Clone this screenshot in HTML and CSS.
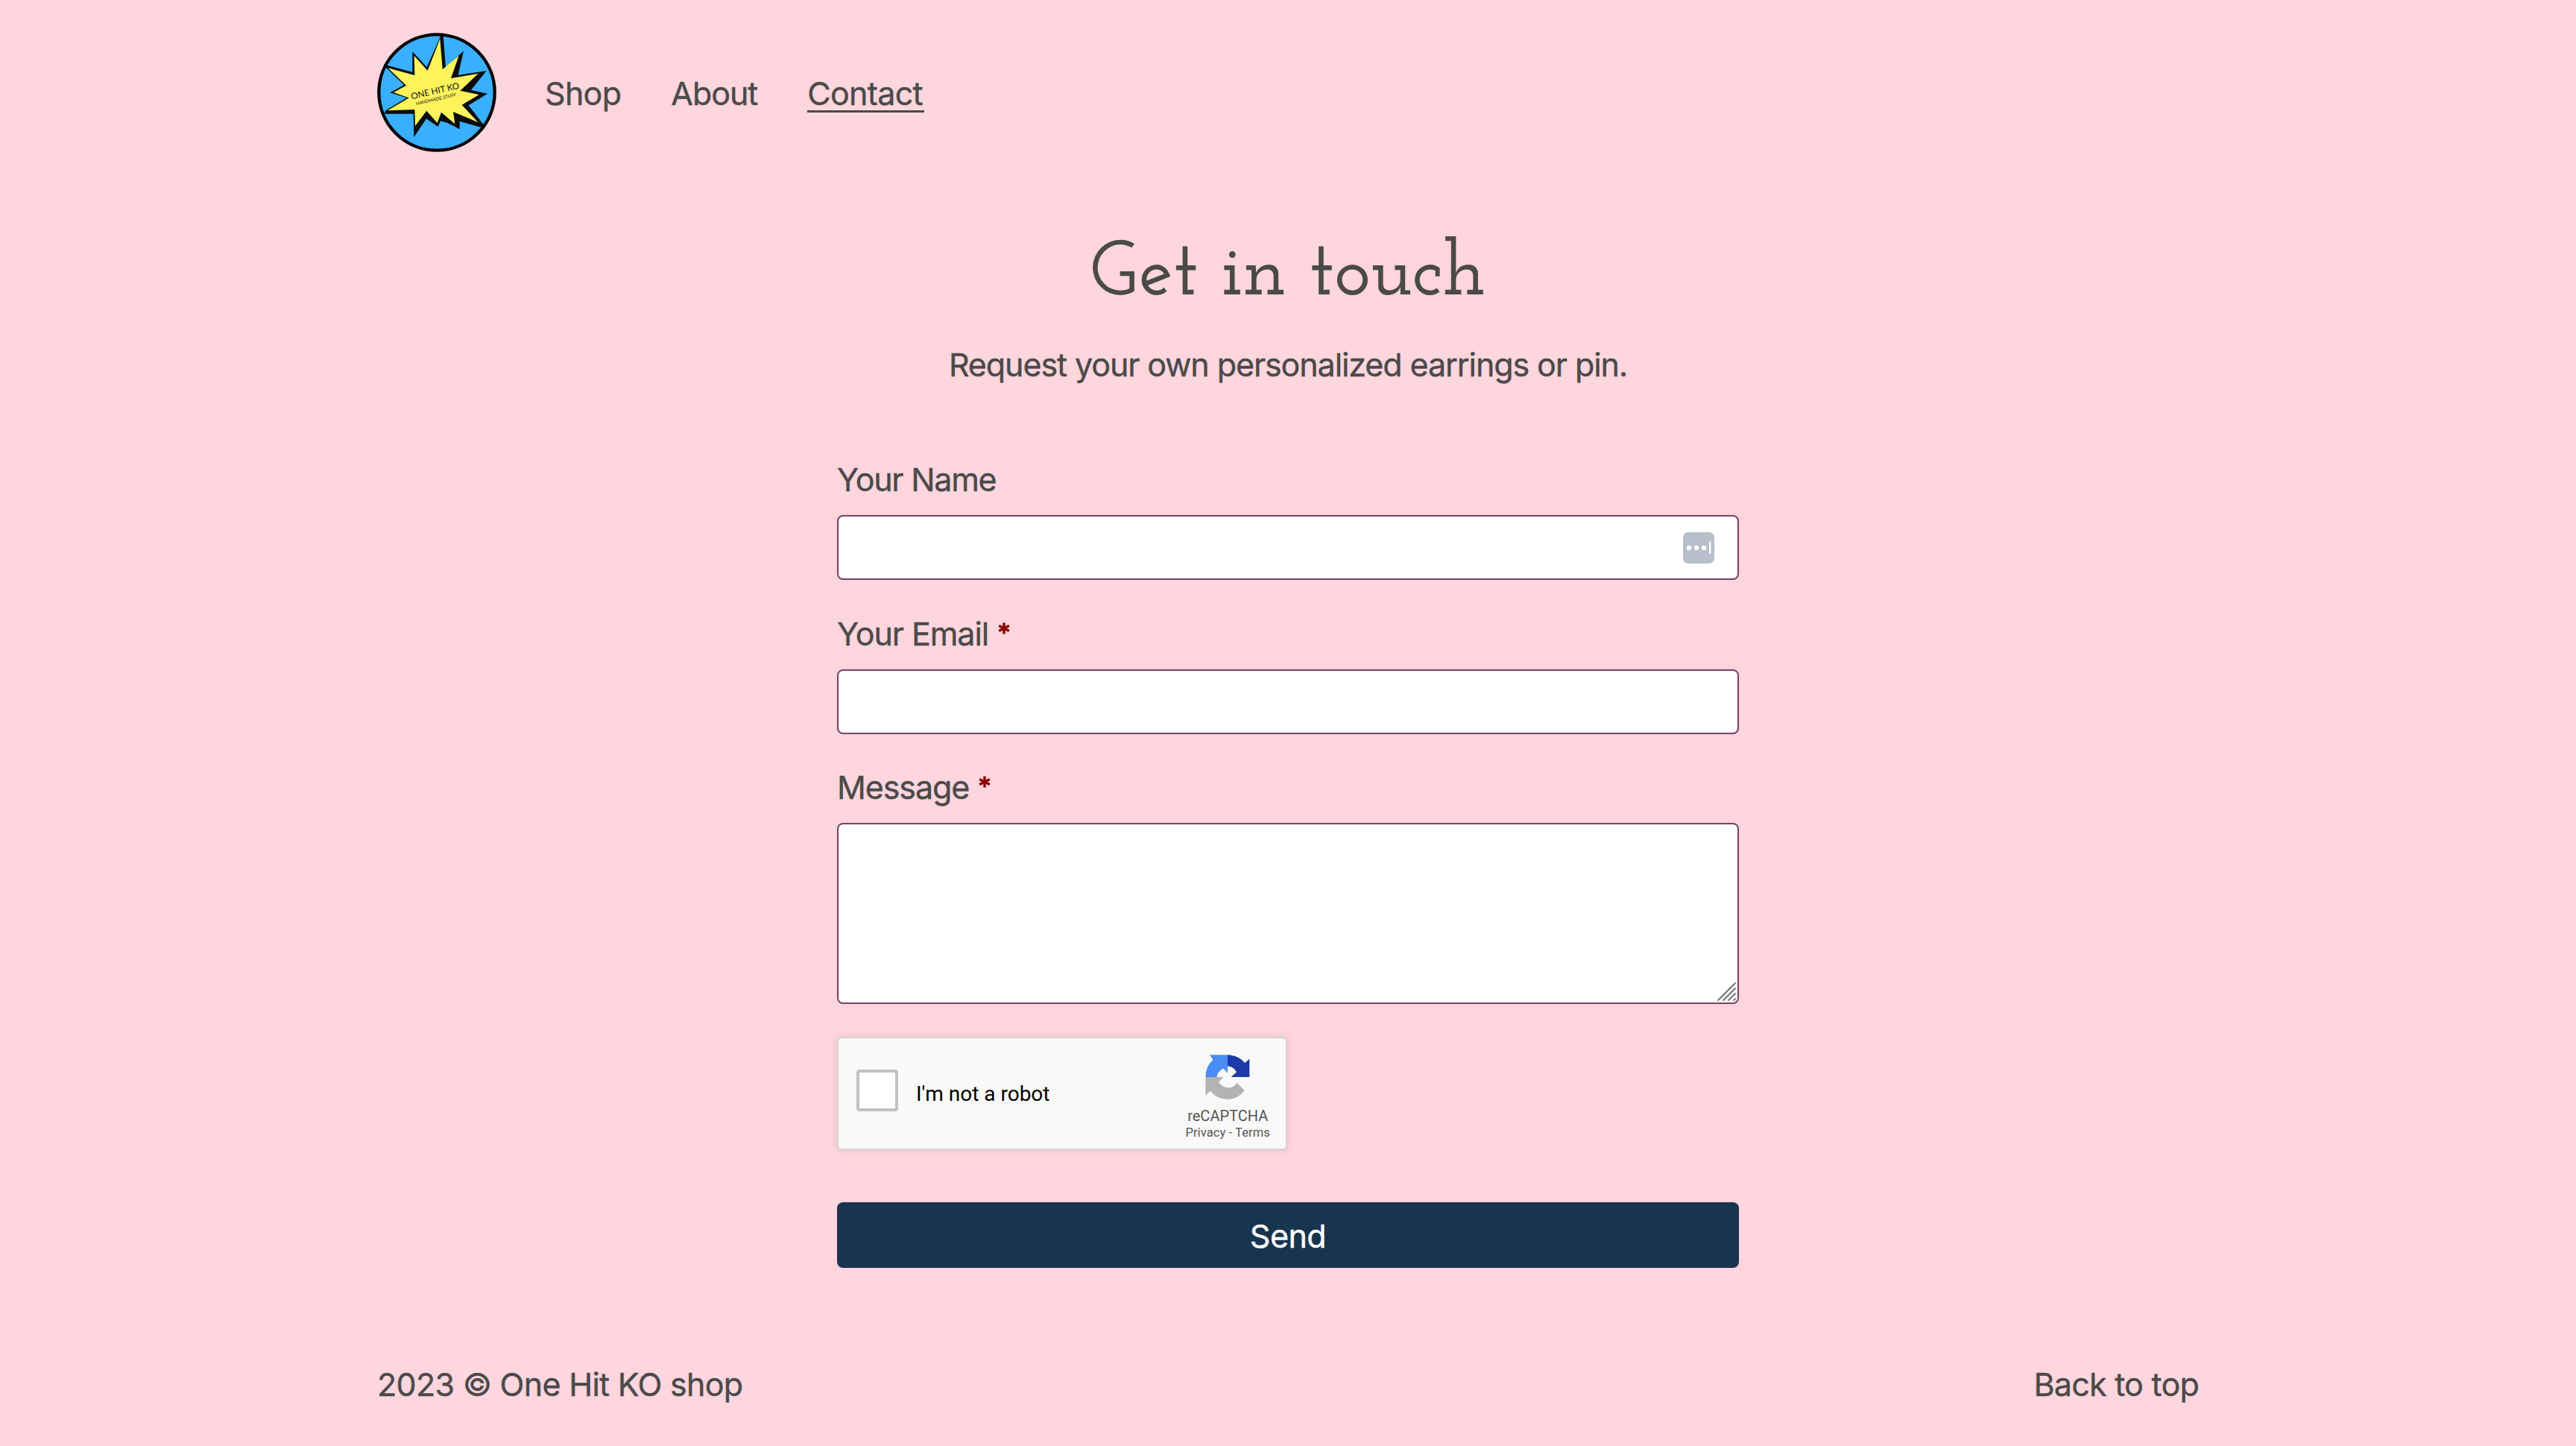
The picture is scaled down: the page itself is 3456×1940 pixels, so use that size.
FILE: index.html
```
<!DOCTYPE html>
<html lang="en">
<head>
<meta charset="utf-8">
<title>Contact – One Hit KO shop</title>
<link rel="stylesheet" href="styles.css">
</head>
<body>
<header class="header">
  <a class="logo" href="#">
    <svg viewBox="30 30 480 480" role="img" aria-label="One Hit KO">
      <circle cx="270" cy="270" r="234" fill="#38b0ff"/>
      <path d="M296 42L306 170L378 103L356 200L470 183L408 260L474 275L398 322L458 400L446 410L362 386V418L312 392L285 385L275 408L228 376L178 450L176 356L60 356L62 344L148 292L82 271L138 240L66 170L66 160L172 188V106L230 168L286 42Z" fill="#0b0b10"/>
      <path d="M283 54L293 177L359 122L327 213L437 194L364 263L440 279L371 320L436 390L336 348L343 397L288 350L272 393L229 344L183 405L181 339L72 343L158 292L96 270L147 242L74 172L181 201L179 122L233 182Z" fill="#fff35c"/>
      <circle cx="270" cy="270" r="233" fill="none" stroke="#000" stroke-width="13"/>
      <g transform="rotate(-13 265 272)" font-family="Lato, sans-serif" fill="#111">
        <text x="166" y="276" font-size="35" font-weight="400" textLength="198">ONE HIT KO</text>
        <text x="178" y="303" font-size="18" font-weight="400" textLength="166">HANDMADE STUFF</text>
      </g>
    </svg>
  </a>
  <nav class="nav">
    <a class="nav-shop" href="#">Shop</a>
    <a class="nav-about" href="#">About</a>
    <a class="nav-contact" href="#">Contact</a>
  </nav>
</header>

<main class="main">
  <h1 class="title">Get in touch</h1>
  <p class="intro">Request your own personalized earrings or pin.</p>
  <form class="form">
    <div class="field">
      <label class="label-name" for="name">Your Name</label>
      <div class="control">
        <input id="name" type="text">
        <svg class="autofill" viewBox="0 0 42 42" aria-hidden="true">
          <rect width="42" height="42" rx="7" fill="#b8bfca"/>
          <g fill="#fff"><circle cx="8" cy="21" r="3.2"/><circle cx="18" cy="21" r="3.2"/><circle cx="28" cy="21" r="3.2"/><rect x="35" y="12.500" width="2.300" height="17" rx="1"/></g>
        </svg>
      </div>
    </div>
    <div class="field">
      <label class="label-email" for="email">Your Email <svg class="required" viewBox="0 0 16 16"><path d="M8 0.500V15.500M1.200 4.500L14.800 11.500M1.200 11.500L14.800 4.500"/></svg></label>
      <div class="control"><input id="email" type="email"></div>
    </div>
    <div class="field">
      <label class="label-message" for="message">Message <svg class="required" viewBox="0 0 16 16"><path d="M8 0.500V15.500M1.200 4.500L14.800 11.500M1.200 11.500L14.800 4.500"/></svg></label>
      <div class="control">
        <textarea id="message"></textarea>
        <svg class="grip" viewBox="0 0 25 25" aria-hidden="true"><path d="M.5 24.500L24.500 .500M7.500 24.500L24.500 7.500M14.500 24.500L24.500 14.500M21.500 24.500L24.500 21.500"/></svg>
      </div>
    </div>
    <div class="captcha">
      <span class="checkbox"></span>
      <span class="captcha-label">I'm not a robot</span>
      <div class="captcha-brand">
        <svg viewBox="172 76 180 180" aria-hidden="true">
          <path d="M190 77H262V150L245 131Q221 145 218 166H173Q174 122 203 97Z" fill="#4a8cf5"/>
          <path d="M262 77C290 78 315 90 331 109L350 93V166H276L298 146Q285 124 262 122Z" fill="#1c3aa9"/>
          <path d="M173 166H245L226 187Q243 209 265 209Q287 208 299 189L330 220Q305 255 262 256Q220 255 192 222L173 240Z" fill="#b3b3b3"/>
        </svg>
        <span class="brand-name">reCAPTCHA</span>
        <span class="brand-links">Privacy - Terms</span>
      </div>
    </div>
    <button class="send" type="button">Send</button>
  </form>
</main>

<footer class="footer">
  <span class="copyright">2023 © One Hit KO shop</span>
  <a class="to-top" href="#">Back to top</a>
</footer>
</body>
</html>
```
FILE: styles.css
```
* { box-sizing: border-box; }

body {
  margin: 0;
  height: 1940px;
  overflow: hidden;
  background: #ffd5de;
  color: #4a4a48;
  font: 400 43px/66px Inter, "Liberation Sans", sans-serif;
  -webkit-text-stroke: 0.4px currentColor;
}

a { color: inherit; text-decoration: none; }

.header, .footer {
  display: flex;
  align-items: center;
  width: 2444px;
  margin: 0 auto;
}

.header { height: 248px; gap: 65px; }

.logo, .logo svg { display: block; width: 160px; height: 160px; }

.nav { display: flex; gap: 67px; padding-top: 2px; }
.nav-shop { letter-spacing: -0.7px; }
.nav-about { letter-spacing: -1.05px; }
.nav-contact {
  height: 59px;
  padding-right: 2px;
  border-bottom: 3px solid #4a4a48;
  letter-spacing: -0.75px;
}

.main { width: 1210px; margin: 0 auto; }

.title {
  margin: 61px 0 0;
  height: 147px;
  font: 600 103.4px/120px "Josefin Slab", "Roboto Slab", "Noto Serif", serif;
  text-align: center;
  white-space: nowrap;
  -webkit-text-stroke: 0;
}

.intro {
  margin: 0;
  text-align: center;
  letter-spacing: -1.09px;
}

.form { margin-top: 88px; }

.field { margin-bottom: 38.67px; }
.field label { display: block; height: 66px; margin-bottom: 15px; }
.label-name { letter-spacing: -1.25px; }
.label-email { letter-spacing: -1.08px; }
.label-message { letter-spacing: -1.1px; }

.required {
  width: 16px;
  height: 16px;
  margin-left: 2px;
  vertical-align: 15px;
  overflow: visible;
  fill: none;
  stroke: #8b0000;
  stroke-width: 3.4;
}

.control { position: relative; }

input, textarea {
  display: block;
  width: 100%;
  height: 87px;
  padding: 0 16px;
  border: 2px solid #774068;
  border-radius: 8px;
  background: #fff;
  font: inherit;
  resize: none;
  outline: none;
}

textarea { height: 243px; }

.autofill {
  position: absolute;
  top: 23px;
  right: 33px;
  width: 42px;
  height: 42px;
}

.grip {
  position: absolute;
  right: 4px;
  bottom: 4px;
  width: 25px;
  height: 25px;
  fill: none;
  stroke: #707070;
  stroke-width: 2;
}

.captcha {
  display: flex;
  align-items: center;
  width: 604px;
  height: 152px;
  margin-top: 44px;
  padding: 0 21px 0 24px;
  border: 2px solid #d3d3d3;
  border-radius: 6px;
  background: #f9f9f9;
  box-shadow: 0 0 8px 2px rgba(0, 0, 0, 0.08);
  font-family: Roboto, sans-serif;
  -webkit-text-stroke: 0;
}

.checkbox {
  width: 56px;
  height: 56px;
  margin-bottom: 8px;
  border: 4px solid #c1c1c1;
  border-radius: 4px;
  background: #fff;
}

.captcha-label {
  margin-left: 24px;
  padding-top: 1px;
  color: #000;
  font-size: 28px;
  line-height: 34px;
}

.captcha-brand {
  display: flex;
  flex-direction: column;
  align-items: center;
  margin-left: auto;
  padding-top: 11px;
  color: #555;
}

.captcha-brand svg { width: 60px; height: 60px; margin-bottom: 10px; }
.brand-name { font-size: 20px; line-height: 24px; }
.brand-links { font-size: 16.5px; line-height: 22px; letter-spacing: 0.1px; }

.send {
  display: block;
  width: 100%;
  height: 88px;
  margin-top: 70px;
  padding: 2px 0 0;
  border: 0;
  border-radius: 8px;
  background: #19344e;
  color: #fff;
  font: inherit;
  letter-spacing: -0.5px;
}

.footer { justify-content: space-between; margin-top: 123px; }
.copyright { letter-spacing: -0.72px; }
.to-top { letter-spacing: -0.75px; }
```
